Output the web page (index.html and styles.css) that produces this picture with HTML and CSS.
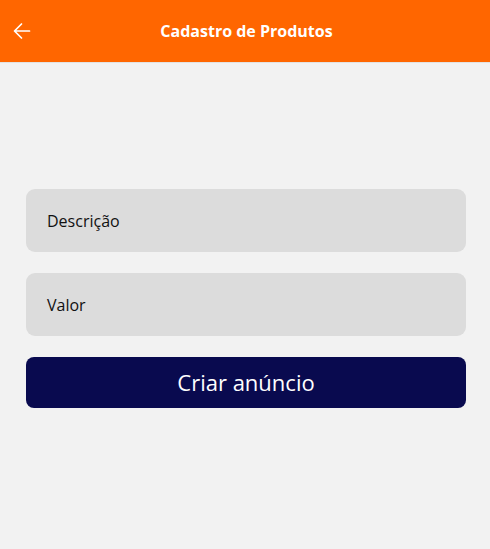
FILE: index.html
```html
<!DOCTYPE html>
<html lang="pt">
<head>
<meta charset="utf-8">
<title>Cadastro de Produtos</title>
<link rel="stylesheet" href="styles.css">
</head>
<body>
<header class="appbar">
  <button class="back" aria-label="Voltar">
    <svg width="18" height="18" viewBox="0 0 18 18" fill="none" stroke="#fff" stroke-width="1.7" stroke-linecap="round" stroke-linejoin="round">
      <path d="M16.5 9H1.8M8.5 2L1.5 9l7 7"/>
    </svg>
  </button>
  <h1 class="title">Cadastro de Produtos</h1>
</header>
<main class="form">
  <div class="field">Descrição</div>
  <div class="field">Valor</div>
  <button class="submit">Criar anúncio</button>
</main>
</body>
</html>
```
FILE: styles.css
```css
html, body {
  margin: 0;
  padding: 0;
  background: #f2f2f2;
  font-family: "Open Sans", "Noto Sans", sans-serif;
}
.appbar {
  height: 62px;
  background: #ff6600;
  border-bottom: 1px solid #e2e2e2;
  display: flex;
  align-items: center;
  justify-content: center;
  position: relative;
}
.back {
  position: absolute;
  left: 13px;
  top: 22px;
  width: 18px;
  height: 18px;
  padding: 0;
  border: 0;
  background: none;
  display: flex;
}
.title {
  margin: 0;
  color: #fff;
  font-size: 16px;
  font-weight: 700;
  padding-left: 3px;
}
.form {
  padding: 126px 24px 0 26px;
  display: flex;
  flex-direction: column;
  gap: 21px;
}
.field {
  height: 63px;
  background: #dcdcdc;
  border-radius: 9px;
  display: flex;
  align-items: center;
  padding-left: 21px;
  padding-top: 1px;
  box-sizing: border-box;
  font-size: 16px;
  color: #111;
}
.submit {
  height: 51px;
  background: #090a4f;
  border: 0;
  border-radius: 8px;
  color: #fff;
  font-family: "Open Sans", "Noto Sans", sans-serif;
  font-size: 22px;
  padding: 0 0 1px 0;
}
```
